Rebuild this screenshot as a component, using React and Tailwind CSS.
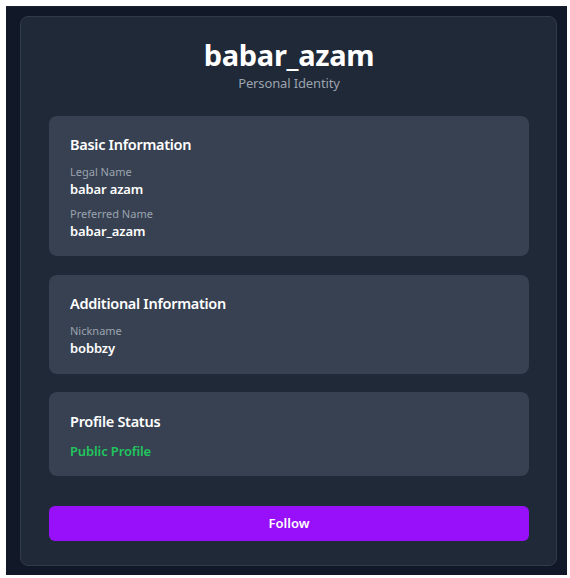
export default function App() {
  const font = { fontFamily: '"Noto Sans", "Open Sans", sans-serif' };
  return (
    <div className="w-[570px] h-[578px] bg-white pl-[6px] pt-[6px] pr-[3px] pb-[3px]" style={font}>
      <div className="h-full bg-[#111827] pl-[14px] pr-[10px] pt-[9px] border-t border-[#1a2232]">
        <div className="w-[537px] h-[550px] bg-[#1f2937] border border-[#2f3a4a] rounded-lg pl-[28px] pr-[27px] pt-[20px]">
          <div className="text-center">
            <h1 className="text-[29px] leading-[36px] font-bold text-white tracking-[-0.01em]">babar_azam</h1>
            <p className="text-[13px] leading-[20px] text-[#9ca3af] tracking-[-0.01em]">Personal Identity</p>
          </div>

          <div className="mt-[23px] h-[140px] bg-[#374151] rounded-lg px-[21px] pt-[16px]">
            <h2 className="text-[14.5px] leading-[24px] font-semibold text-white tracking-[-0.02em]">Basic Information</h2>
            <div className="mt-[8px]">
              <p className="text-[11px] leading-[16px] text-[#9ca3af]">Legal Name</p>
              <p className="text-[13px] leading-[18px] font-semibold text-white tracking-[-0.01em]">babar azam</p>
            </div>
            <div className="mt-[8px]">
              <p className="text-[11px] leading-[16px] text-[#9ca3af]">Preferred Name</p>
              <p className="text-[13px] leading-[18px] font-semibold text-white tracking-[-0.01em]">babar_azam</p>
            </div>
          </div>

          <div className="mt-[19px] h-[99px] bg-[#374151] rounded-lg px-[21px] pt-[16px]">
            <h2 className="text-[14.5px] leading-[24px] font-semibold text-white tracking-[-0.02em]">Additional Information</h2>
            <div className="mt-[8px]">
              <p className="text-[11px] leading-[16px] text-[#9ca3af]">Nickname</p>
              <p className="text-[13px] leading-[18px] font-semibold text-white tracking-[-0.01em]">bobbzy</p>
            </div>
          </div>

          <div className="mt-[18px] h-[84px] bg-[#374151] rounded-lg px-[21px] pt-[17px]">
            <h2 className="text-[14.5px] leading-[24px] font-semibold text-white tracking-[-0.02em]">Profile Status</h2>
            <p className="mt-[9px] text-[13px] leading-[18px] font-semibold text-[#22c55e] tracking-[-0.01em]">Public Profile</p>
          </div>

          <button className="mt-[30px] w-full h-[35px] bg-[#9810fa] rounded-md text-[13px] font-semibold text-white">
            Follow
          </button>
        </div>
      </div>
    </div>
  );
}
